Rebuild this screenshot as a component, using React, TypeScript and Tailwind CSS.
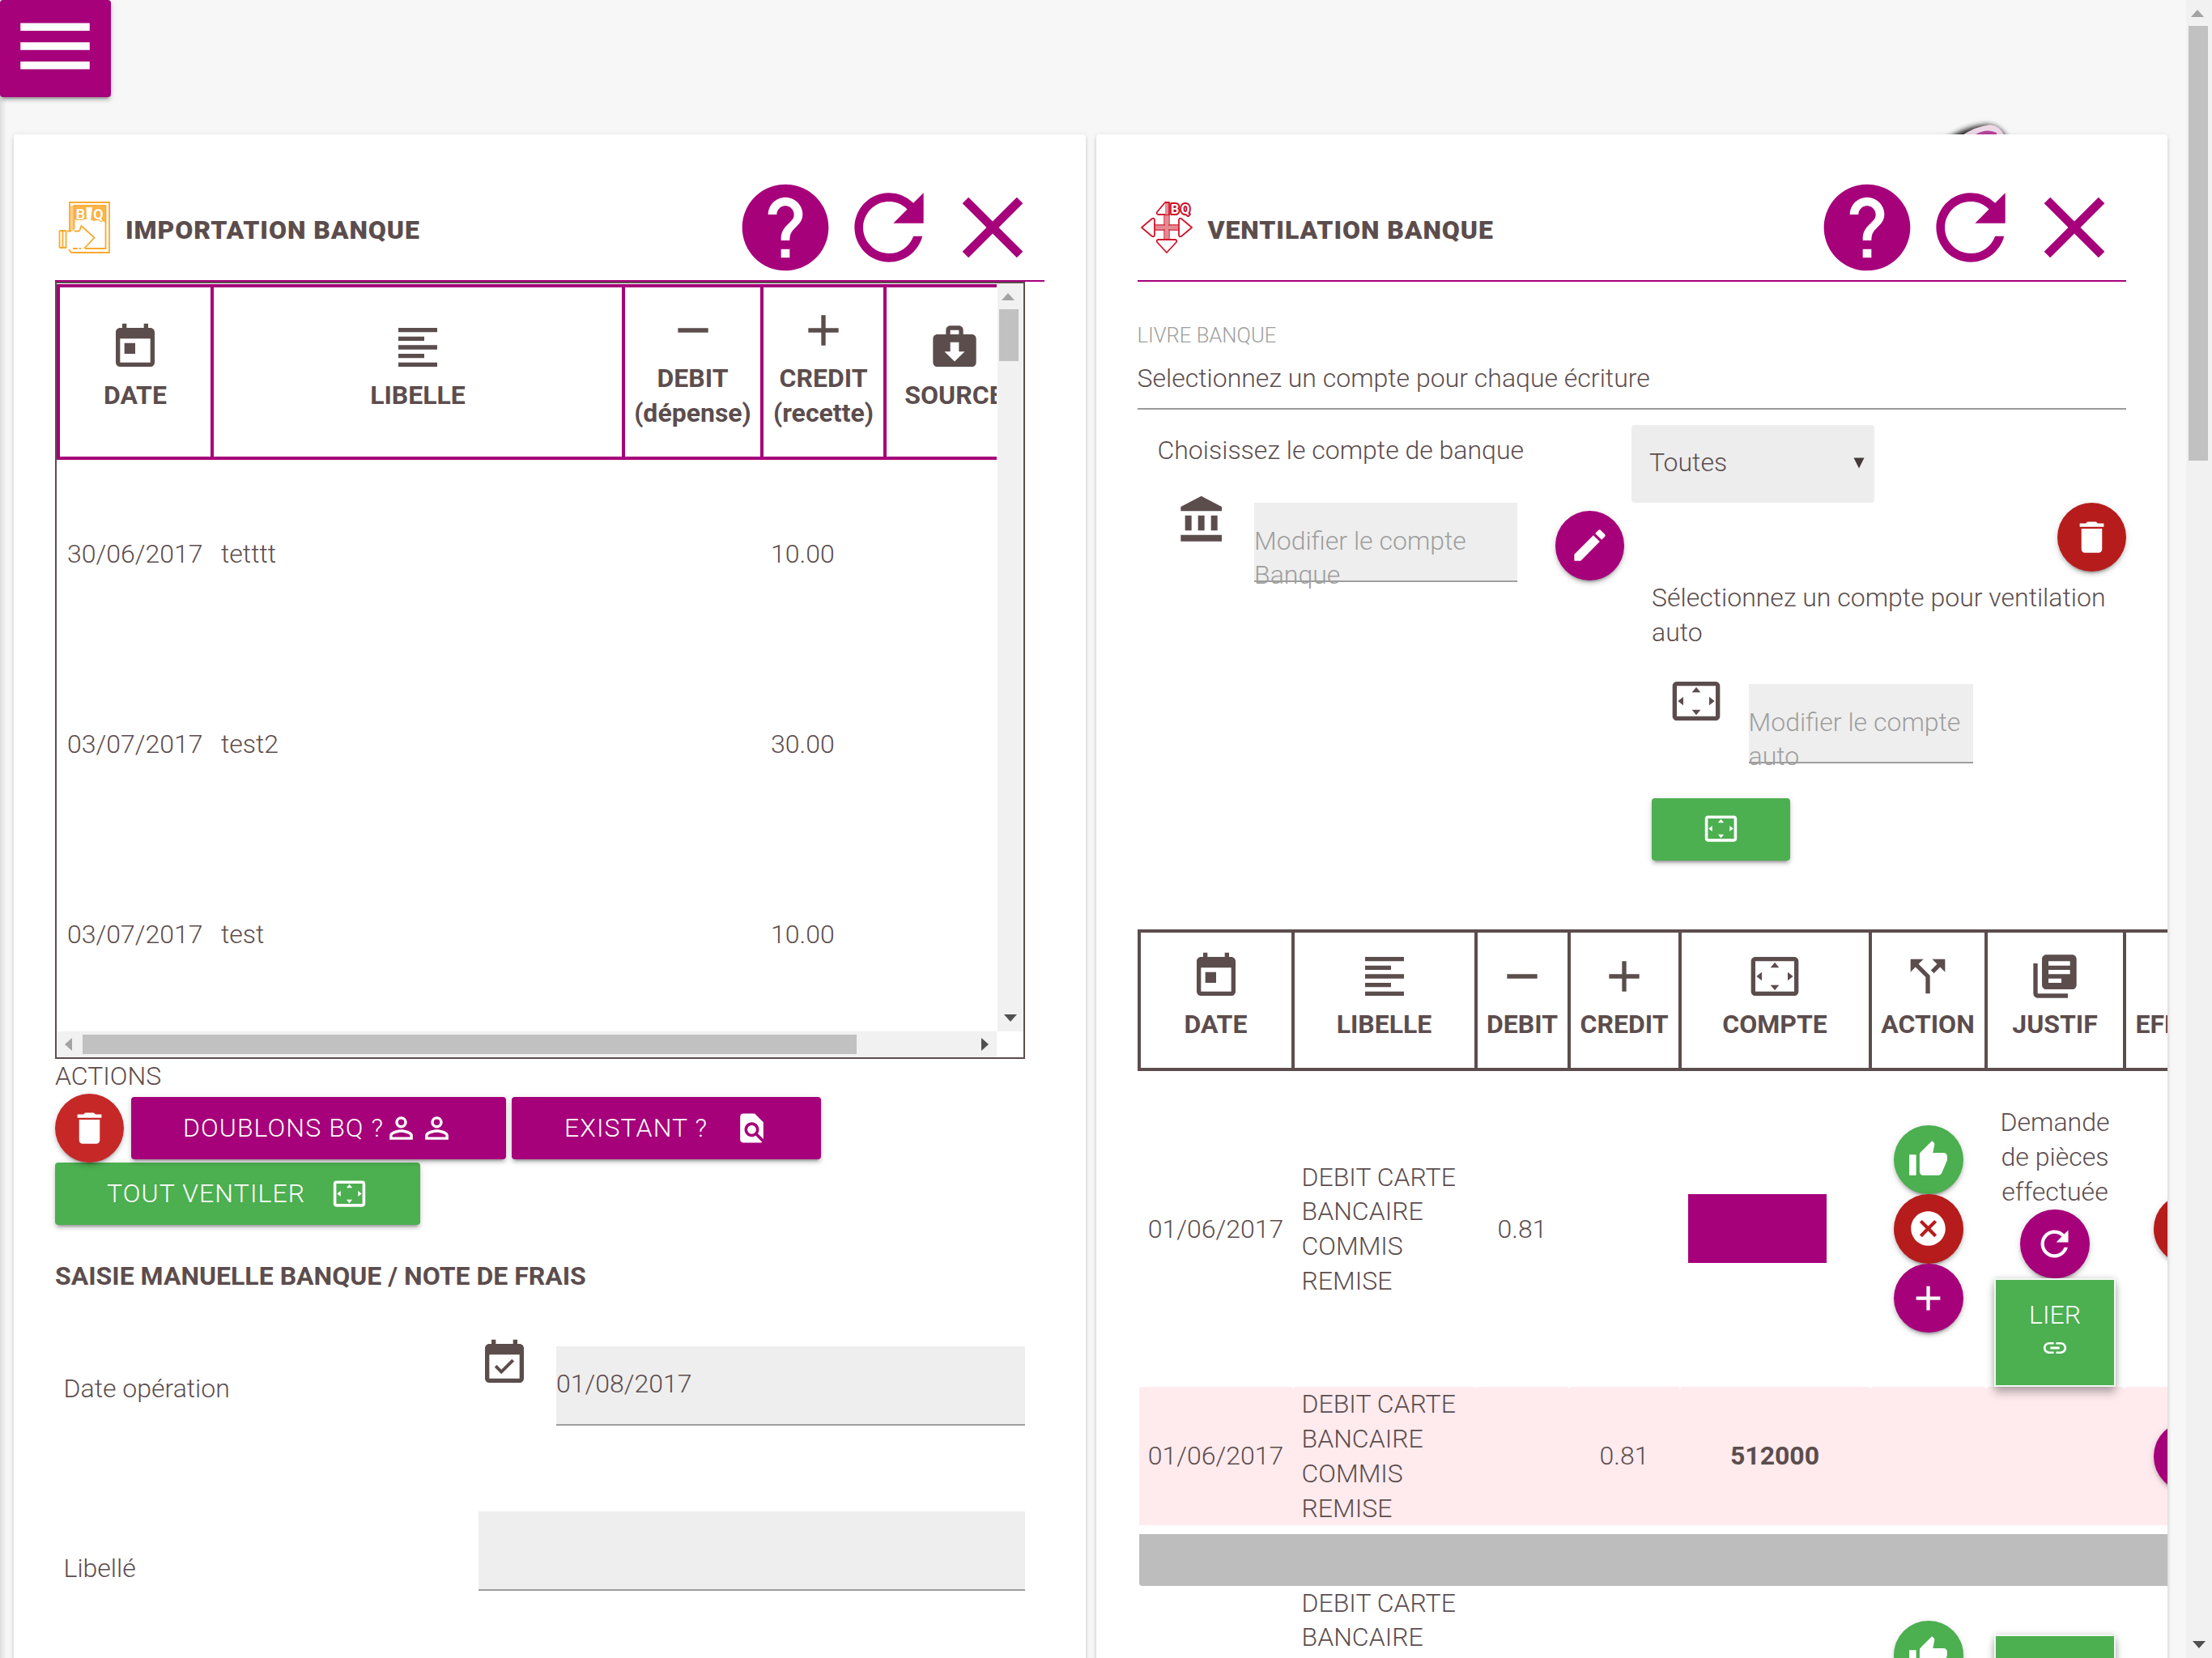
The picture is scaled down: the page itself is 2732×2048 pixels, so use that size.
import type { ReactNode } from 'react'
import {
  MdAdd,
  MdCallSplit,
  MdCancel,
  MdClose,
  MdDelete,
  MdEdit,
  MdEventAvailable,
  MdFindInPage,
  MdFormatAlignLeft,
  MdHelp,
  MdLibraryBooks,
  MdLink,
  MdMenu,
  MdPersonOutline,
  MdRefresh,
  MdRemove,
  MdSettingsOverscan,
  MdThumbUp,
  MdToday
} from 'react-icons/md'

const SHADOW = 'shadow-[0_4px_4px_0_rgba(0,0,0,0.14),0_2px_10px_0_rgba(0,0,0,0.12),0_6px_2px_-4px_rgba(0,0,0,0.2)]'
const IMPORT_COLS = 'grid-cols-[190px_508px_171px_152px_167px]'
const VENTIL_COLS = 'grid-cols-[190px_226px_115px_137px_235px_143px_171px_200px]'

const importRows = [
  { date: '30/06/2017', label: 'tetttt', credit: '10.00' },
  { date: '03/07/2017', label: 'test2', credit: '30.00' },
  { date: '03/07/2017', label: 'test', credit: '10.00' }
]

function BankIcon({ className }: { className?: string }) {
  return (
    <svg viewBox="0 0 24 24" fill="currentColor" className={className}>
      <path d="M4 10v7h3v-7H4zm6 0v7h3v-7h-3zM2 22h19v-3H2v3zm14-12v7h3v-7h-3zm-4.5-9L2 6v2h19V6l-9.5-5z" />
    </svg>
  )
}

function SourceIcon({ className }: { className?: string }) {
  return (
    <svg viewBox="0 0 24 24" fill="currentColor" className={className}>
      <path
        fillRule="evenodd"
        d="M20 6h-4V4c0-1.1-.9-2-2-2h-4c-1.1 0-2 .9-2 2v2H4c-1.1 0-2 .9-2 2v11c0 1.1.9 2 2 2h16c1.1 0 2-.9 2-2V8c0-1.1-.9-2-2-2zM10 4h4v2h-4V4zm2 14.6L7.3 14H10V9.7h4V14h2.7L12 18.6z"
      />
    </svg>
  )
}

function ImportLogo() {
  return (
    <svg viewBox="0 0 64 64" className="w-16 h-16" fill="none" stroke="#fba92c" strokeWidth="1.8">
      <rect x="14" y="5" width="6" height="31" fill="#ffcf8f" stroke="none" />
      <path d="M14 36V1H63V63H16L13 59" />
      <path d="M19.500 34V5H58.500V58H33" />
      <path d="M20 5H58V26L52 22L44 24L38 22H20Z" fill="#fcb44a" stroke="none" />
      <path d="M34.500 7H42L40 24H35Z" fill="#fff" stroke="none" />
      <g fontSize="18.500" fontWeight="700" fontFamily="Roboto, sans-serif" fill="#fff" stroke="#fba92c" strokeWidth="2" style={{ paintOrder: 'stroke' }}>
        <text x="21.500" y="22">B</text>
        <text x="43" y="22">Q</text>
      </g>
      <path d="M11 36.500H26L28.500 30L44.500 44.500L32 58H11Z" fill="#fff" stroke="none" />
      <path d="M26 36.500L28.500 30L44.500 44.500L32 58M1.500 36H10M1.500 57H10M1.500 36V57M5.500 36V57M9.500 36V57" />
      <path d="M11 36.500H16M20 36.500H26M18 58H28" strokeDasharray="6 1.500" />
    </svg>
  )
}

function VentilLogo() {
  return (
    <svg viewBox="0 0 64 64" className="w-16 h-16" fill="none" stroke="#d0152c" strokeWidth="1.8" strokeLinejoin="round">
      <path d="M29 16V47M35 16V47M15 29H48M15 35H48" strokeWidth="1.3" />
      <path d="M32 16V47M15 32H48" stroke="#e58a93" strokeWidth="4.5" />
      <path d="M1 32L14 21Q17 20 17 23V41Q17 44 14 43Z" fill="#fff" />
      <path d="M63 32L50 21Q47 20 47 23V41Q47 44 50 43Z" fill="#fff" />
      <path d="M32 63L20 50Q19 47 22 47H42Q45 47 44 50Z" fill="#fff" />
      <path d="M35 1H30L20 13Q19 16 22 16H35Z" fill="#fff" />
      <path d="M32 2V16" strokeWidth="4" stroke="#e58a93" />
      <g fontSize="16" fontWeight="700" fontFamily="Roboto, sans-serif" fill="#fff" stroke="#c8102a" strokeWidth="4" style={{ paintOrder: 'stroke' }}>
        <text x="37" y="14.500">B</text>
        <text x="49.500" y="14.500">Q</text>
      </g>
    </svg>
  )
}

function Arrow({ dir, muted }: { dir: 'up' | 'down' | 'left' | 'right'; muted?: boolean }) {
  const points = {
    up: '0,13 16,13 8,4',
    down: '0,3 16,3 8,12',
    left: '12,0 12,16 3,8',
    right: '4,0 4,16 13,8'
  }
  return (
    <svg viewBox="0 0 16 16" className="w-4 h-4">
      <polygon points={points[dir]} fill={muted ? '#a3a3a3' : '#505050'} />
    </svg>
  )
}

function CardHeader({ logo, title }: { logo: ReactNode; title: string }) {
  return (
    <div className="flex items-center h-[130.5px] border-b-2 border-[#a6007a]">
      <div className="ml-1">{logo}</div>
      <h2 className="flex-1 ml-[19px] pt-1.5 leading-10 font-black tracking-[0.9px]">{title}</h2>
      <div className="flex text-[#a6007a]">
        <MdHelp className="w-32 h-32" />
        <MdRefresh className="w-32 h-32" />
        <MdClose className="w-32 h-32" />
      </div>
    </div>
  )
}

function HeadCell({ icon, children, className = '' }: { icon?: ReactNode; children: ReactNode; className?: string }) {
  return (
    <div className={`flex flex-col items-center justify-center pb-[11px] text-center font-bold ${className}`}>
      <div className="h-16 mb-[6px]">{icon}</div>
      {children}
    </div>
  )
}

function RoundButton({ color, children }: { color: string; children?: ReactNode }) {
  return (
    <button className={`flex flex-shrink-0 items-center justify-center w-[85.4px] h-[85.4px] rounded-full text-white ${color} ${SHADOW}`}>
      {children}
    </button>
  )
}

function LinkButton() {
  return (
    <button className="flex flex-col items-center flex-shrink-0 w-[150px] h-[134px] pt-[22px] border-2 border-[#f1f8f1] bg-[#4caf50] text-white shadow-[0_8px_10px_0_rgba(0,0,0,0.25),0_0_8px_0_rgba(0,0,0,0.16)]">
      <span>LIER</span>
      <MdLink className="w-[34px] h-[34px] mt-[2px]" />
    </button>
  )
}

function ImportCard() {
  return (
    <section className="w-[1323.5px] h-[1990px] p-[51px] bg-white rounded shadow-[0_4px_4px_0_rgba(0,0,0,0.10),0_1px_6px_0_rgba(0,0,0,0.12)]">
      <CardHeader logo={<ImportLogo />} title="IMPORTATION BANQUE" />

      {/* Scrollable table */}
      <div className="flex flex-col w-[1197.5px] h-[960.5px] border-2 border-[#5c4d4d]">
        <div className="flex flex-1 min-h-0">
          <div className="w-[1161px] overflow-hidden pt-px">
            <div className={`grid w-[1196px] h-[217px] border-4 border-[#a6007a] ${IMPORT_COLS}`}>
              <HeadCell className="border-r-4 border-[#a6007a]" icon={<MdToday className="w-16 h-16" />}>DATE</HeadCell>
              <HeadCell className="border-r-4 border-[#a6007a]" icon={<MdFormatAlignLeft className="w-16 h-16" />}>LIBELLE</HeadCell>
              <HeadCell className="border-r-4 border-[#a6007a]" icon={<MdRemove className="w-16 h-16" />}>DEBIT<br />(dépense)</HeadCell>
              <HeadCell className="border-r-4 border-[#a6007a]" icon={<MdAdd className="w-16 h-16" />}>CREDIT<br />(recette)</HeadCell>
              <HeadCell icon={<SourceIcon className="w-16 h-16" />}>SOURCE</HeadCell>
            </div>
            {importRows.map((row, i) => (
              <div key={i} className={`grid w-[1196px] h-[234.8px] pl-[2px] pb-px items-center ${IMPORT_COLS}`}>
                <div className="pl-[11px]">{row.date}</div>
                <div className="pl-[11px]">{row.label}</div>
                <div />
                <div className="pl-[11px]">{row.credit}</div>
                <div />
              </div>
            ))}
          </div>
          <div className="flex flex-col items-center justify-between w-[32px] ml-px py-2 bg-[#f1f1f1]">
            <div>
              <Arrow dir="up" muted />
              <div className="w-6 h-[64px] mt-2 -ml-[3px] bg-[#c1c1c1]" />
            </div>
            <Arrow dir="down" />
          </div>
        </div>
        <div className="flex items-center justify-between w-[1161px] h-[32px] px-[7px] bg-[#f1f1f1]">
          <div className="flex items-center">
            <Arrow dir="left" muted />
            <div className="w-[956px] h-6 ml-[9px] bg-[#c1c1c1]" />
          </div>
          <Arrow dir="right" />
        </div>
      </div>

      {/* Actions */}
      <div>ACTIONS</div>
      <div className="flex items-center">
        <RoundButton color="bg-[#c62828]"><MdDelete className="w-[51px] h-[51px]" /></RoundButton>
        <button className={`flex items-center w-[463px] h-[77px] ml-[8.5px] pl-[64px] rounded bg-[#a6007a] text-white tracking-[1.1px] ${SHADOW}`}>
          DOUBLONS BQ ?
          <MdPersonOutline className="w-[43px] h-[43px]" />
          <MdPersonOutline className="w-[43px] h-[43px] ml-[1px]" />
        </button>
        <button className={`flex items-center w-[382px] h-[77px] ml-[7px] pl-[65px] rounded bg-[#a6007a] text-white tracking-[1.1px] ${SHADOW}`}>
          EXISTANT ?
          <MdFindInPage className="w-[43px] h-[43px] ml-[33px]" />
        </button>
      </div>
      <button className={`flex items-center w-[451px] h-[77px] pl-[64px] rounded bg-[#4caf50] text-white tracking-[1.1px] ${SHADOW}`}>
        TOUT VENTILER
        <MdSettingsOverscan className="w-[43px] h-[43px] ml-[33px]" />
      </button>

      {/* Manual entry form */}
      <h3 className="mt-[42px] font-bold">SAISIE MANUELLE BANQUE / NOTE DE FRAIS</h3>
      <div className="flex w-[1197.5px] h-[215.7px] mt-[54px]">
        <label className="w-[523px] pl-[10.5px] pt-[42px]">Date opération</label>
        <MdEventAvailable className="w-16 h-16" />
        <div className="flex-1 h-[98px] ml-[32px] mt-[11px] pt-[25px] border-b-2 border-[#9e9e9e] bg-[#eeeeee]">01/08/2017</div>
      </div>
      <div className="flex w-[1197.5px]">
        <label className="w-[523px] pl-[10.5px] pt-[49px]">Libellé</label>
        <div className="flex-1 h-[98px] border-b-2 border-[#9e9e9e] bg-[#eeeeee]" />
      </div>
    </section>
  )
}

function AccountFilters() {
  return (
    <div className="flex h-[642px]">
      <div className="w-[610.5px] pt-[29px]">
        <div className="pl-[25px]">Choisissez le compte de banque</div>
        <div className="flex mt-[32.5px] pl-[48px]">
          <BankIcon className="w-16 h-16" />
          <div className="w-[325px] h-[98px] ml-[32.5px] mt-[11px] pt-[25.5px] border-b-2 border-[#9e9e9e] bg-[#eeeeee] text-[#9e9e9e]">
            Modifier le compte Banque
          </div>
          <div className="ml-[47px] mt-[21px]">
            <RoundButton color="bg-[#a6007a]"><MdEdit className="w-[51px] h-[51px]" /></RoundButton>
          </div>
        </div>
      </div>
      <div className="flex-1 pt-[19.5px]">
        <div className="flex items-center justify-between w-[300px] h-[95.5px] pl-[22px] pr-[12px] pb-[3px] rounded bg-[#ededed]">
          Toutes
          <svg viewBox="0 0 14 14" className="w-[14px] h-[14px]"><polygon points="0.500,0.500 13.500,0.500 7,13.500" fill="#453a3a" /></svg>
        </div>
        <div className="flex justify-end">
          <RoundButton color="bg-[#b71c1c]"><MdDelete className="w-[51px] h-[51px]" /></RoundButton>
        </div>
        <div className="pl-[25px] pt-[10.5px]">
          <p className="w-[575px]">Sélectionnez un compte pour ventilation auto</p>
          <div className="flex mt-[32px] pl-[23px]">
            <MdSettingsOverscan className="w-16 h-16" />
            <div className="w-[277.5px] h-[98px] ml-[32.5px] mt-[11px] pt-[25.5px] border-b-2 border-[#9e9e9e] bg-[#eeeeee] text-[#9e9e9e]">
              Modifier le compte auto
            </div>
          </div>
          <button className={`flex items-center justify-center w-[171px] h-[77px] mt-[43px] pb-[3px] rounded bg-[#4caf50] text-white ${SHADOW}`}>
            <MdSettingsOverscan className="w-[43px] h-[43px]" />
          </button>
        </div>
      </div>
    </div>
  )
}

function VentilTable() {
  const line = 'border-r-4 border-[#5c4d4d]'
  return (
    <div className="w-[1424px]">
      <div className={`grid h-[175px] border-4 border-[#5c4d4d] ${VENTIL_COLS}`}>
        <HeadCell className={line} icon={<MdToday className="w-16 h-16" />}>DATE</HeadCell>
        <HeadCell className={line} icon={<MdFormatAlignLeft className="w-16 h-16" />}>LIBELLE</HeadCell>
        <HeadCell className={line} icon={<MdRemove className="w-16 h-16" />}>DEBIT</HeadCell>
        <HeadCell className={line} icon={<MdAdd className="w-16 h-16" />}>CREDIT</HeadCell>
        <HeadCell className={line} icon={<MdSettingsOverscan className="w-16 h-16" />}>COMPTE</HeadCell>
        <HeadCell className={line} icon={<MdCallSplit className="w-16 h-16" />}>ACTION</HeadCell>
        <HeadCell className={line} icon={<MdLibraryBooks className="w-16 h-16" />}>JUSTIF</HeadCell>
        <HeadCell className="items-start pl-[12px]">EFFACER</HeadCell>
      </div>

      <div className={`grid h-[390.5px] pl-[2px] pb-[4px] items-center ${VENTIL_COLS}`}>
        <div className="text-center">01/06/2017</div>
        <div className="w-[210px] pl-[11px]">DEBIT CARTE BANCAIRE COMMIS REMISE</div>
        <div className="text-center">0.81</div>
        <div />
        <div className="w-[171px] h-[85px] ml-[10px] bg-[#a6007a]" />
        <div className="flex flex-col items-center pl-[2px]">
          <RoundButton color="bg-[#4caf50]"><MdThumbUp className="w-[51px] h-[51px]" /></RoundButton>
          <RoundButton color="bg-[#b71c1c]"><MdCancel className="w-[51px] h-[51px]" /></RoundButton>
          <RoundButton color="bg-[#a6007a]"><MdAdd className="w-[51px] h-[51px]" /></RoundButton>
        </div>
        <div className="relative z-10 flex flex-col items-center self-start pt-[42.5px] text-center">
          <p className="w-[150px]">Demande de pièces effectuée</p>
          <RoundButton color="bg-[#a6007a]"><MdRefresh className="w-[51px] h-[51px]" /></RoundButton>
          <LinkButton />
        </div>
        <div className="pl-[36px]"><RoundButton color="bg-[#b71c1c]" /></div>
      </div>

      <div className={`grid h-[170.7px] pl-[2px] *:flex *:items-center *:justify-center *:bg-[#ffebee] *:rounded-t ${VENTIL_COLS}`}>
        <div>01/06/2017</div>
        <div><p className="w-[204px]">DEBIT CARTE BANCAIRE COMMIS REMISE</p></div>
        <div />
        <div>0.81</div>
        <div className="font-bold">512000</div>
        <div />
        <div />
        <div><div className="w-full pl-[36px]"><RoundButton color="bg-[#a6007a]" /></div></div>
      </div>

      <div className="h-[64px] ml-[2px] mt-[10.5px] rounded-b bg-[#bdbdbd]" />

      <div className={`grid h-[390px] pl-[2px] ${VENTIL_COLS}`}>
        <div />
        <div className="w-[210px] pl-[11px]">DEBIT CARTE BANCAIRE COMMIS REMISE</div>
        <div />
        <div />
        <div />
        <div className="flex flex-col items-center pl-[2px] pt-[43px]">
          <RoundButton color="bg-[#4caf50]"><MdThumbUp className="w-[51px] h-[51px]" /></RoundButton>
        </div>
        <div className="flex flex-col items-center pt-[60px]"><LinkButton /></div>
        <div />
      </div>
    </div>
  )
}

function VentilCard() {
  return (
    <section className="w-[1323.5px] h-[1990px] p-[51px] bg-white rounded overflow-hidden shadow-[0_4px_4px_0_rgba(0,0,0,0.10),0_1px_6px_0_rgba(0,0,0,0.12)]">
      <CardHeader logo={<VentilLogo />} title="VENTILATION BANQUE" />
      <div className="mt-[45px] text-[25.6px] text-[#9e9e9e]">LIVRE BANQUE</div>
      <div className="mt-[10.5px]">Selectionnez un compte pour chaque écriture</div>
      <div className="mt-[15.5px] border-t-2 border-[#9a9a9a]" />
      <AccountFilters />
      <VentilTable />
    </section>
  )
}

export default function App() {
  return (
    <div className="flex w-[2732px] h-[2048px] overflow-hidden bg-[#f7f7f7] font-['Roboto',sans-serif] font-light text-[32px] leading-[42.7px] text-[#5c4d4d]">
      <main className="relative w-[2700px]">
        {/* Closed side nav casts a thin shadow on the edge */}
        <div className="absolute left-0 inset-y-0 w-2 bg-gradient-to-r from-black/10 to-transparent" />
        <header className="h-[166px]">
          <button className={`relative flex justify-center w-[136.6px] h-[119.6px] rounded bg-[#a6007a] text-white ${SHADOW}`}>
            <MdMenu className="w-[114px] h-[114px]" />
          </button>
        </header>

        {/* Floating logo hidden behind the second card */}
        <svg viewBox="0 0 90 40" className="absolute left-[2400px] top-[146px] w-[90px] h-[40px]">
          <defs>
            <filter id="logo-shadow" x="-20%" y="-50%" width="140%" height="200%">
              <feGaussianBlur stdDeviation="3" />
            </filter>
          </defs>
          <path d="M4 26Q30 9 54 8Q70 9 78 24V40H4Z" fill="#222" filter="url(#logo-shadow)" />
          <path d="M22 22Q40 10 58 8Q70 9 76 22V40H22Z" fill="#ecd8e6" />
          <path d="M40 20Q54 12 66 18V40H40Z" fill="#b8449b" />
        </svg>

        <div className="relative flex gap-[13px] pl-[17px]">
          <ImportCard />
          <VentilCard />
        </div>
      </main>

      {/* Page scrollbar */}
      <div className="flex flex-col items-center justify-between w-[32px] py-2 bg-[#f1f1f1]">
        <div>
          <Arrow dir="up" muted />
          <div className="w-6 h-[537px] mt-2 -ml-[3px] bg-[#c1c1c1]" />
        </div>
        <Arrow dir="down" />
      </div>
    </div>
  )
}
